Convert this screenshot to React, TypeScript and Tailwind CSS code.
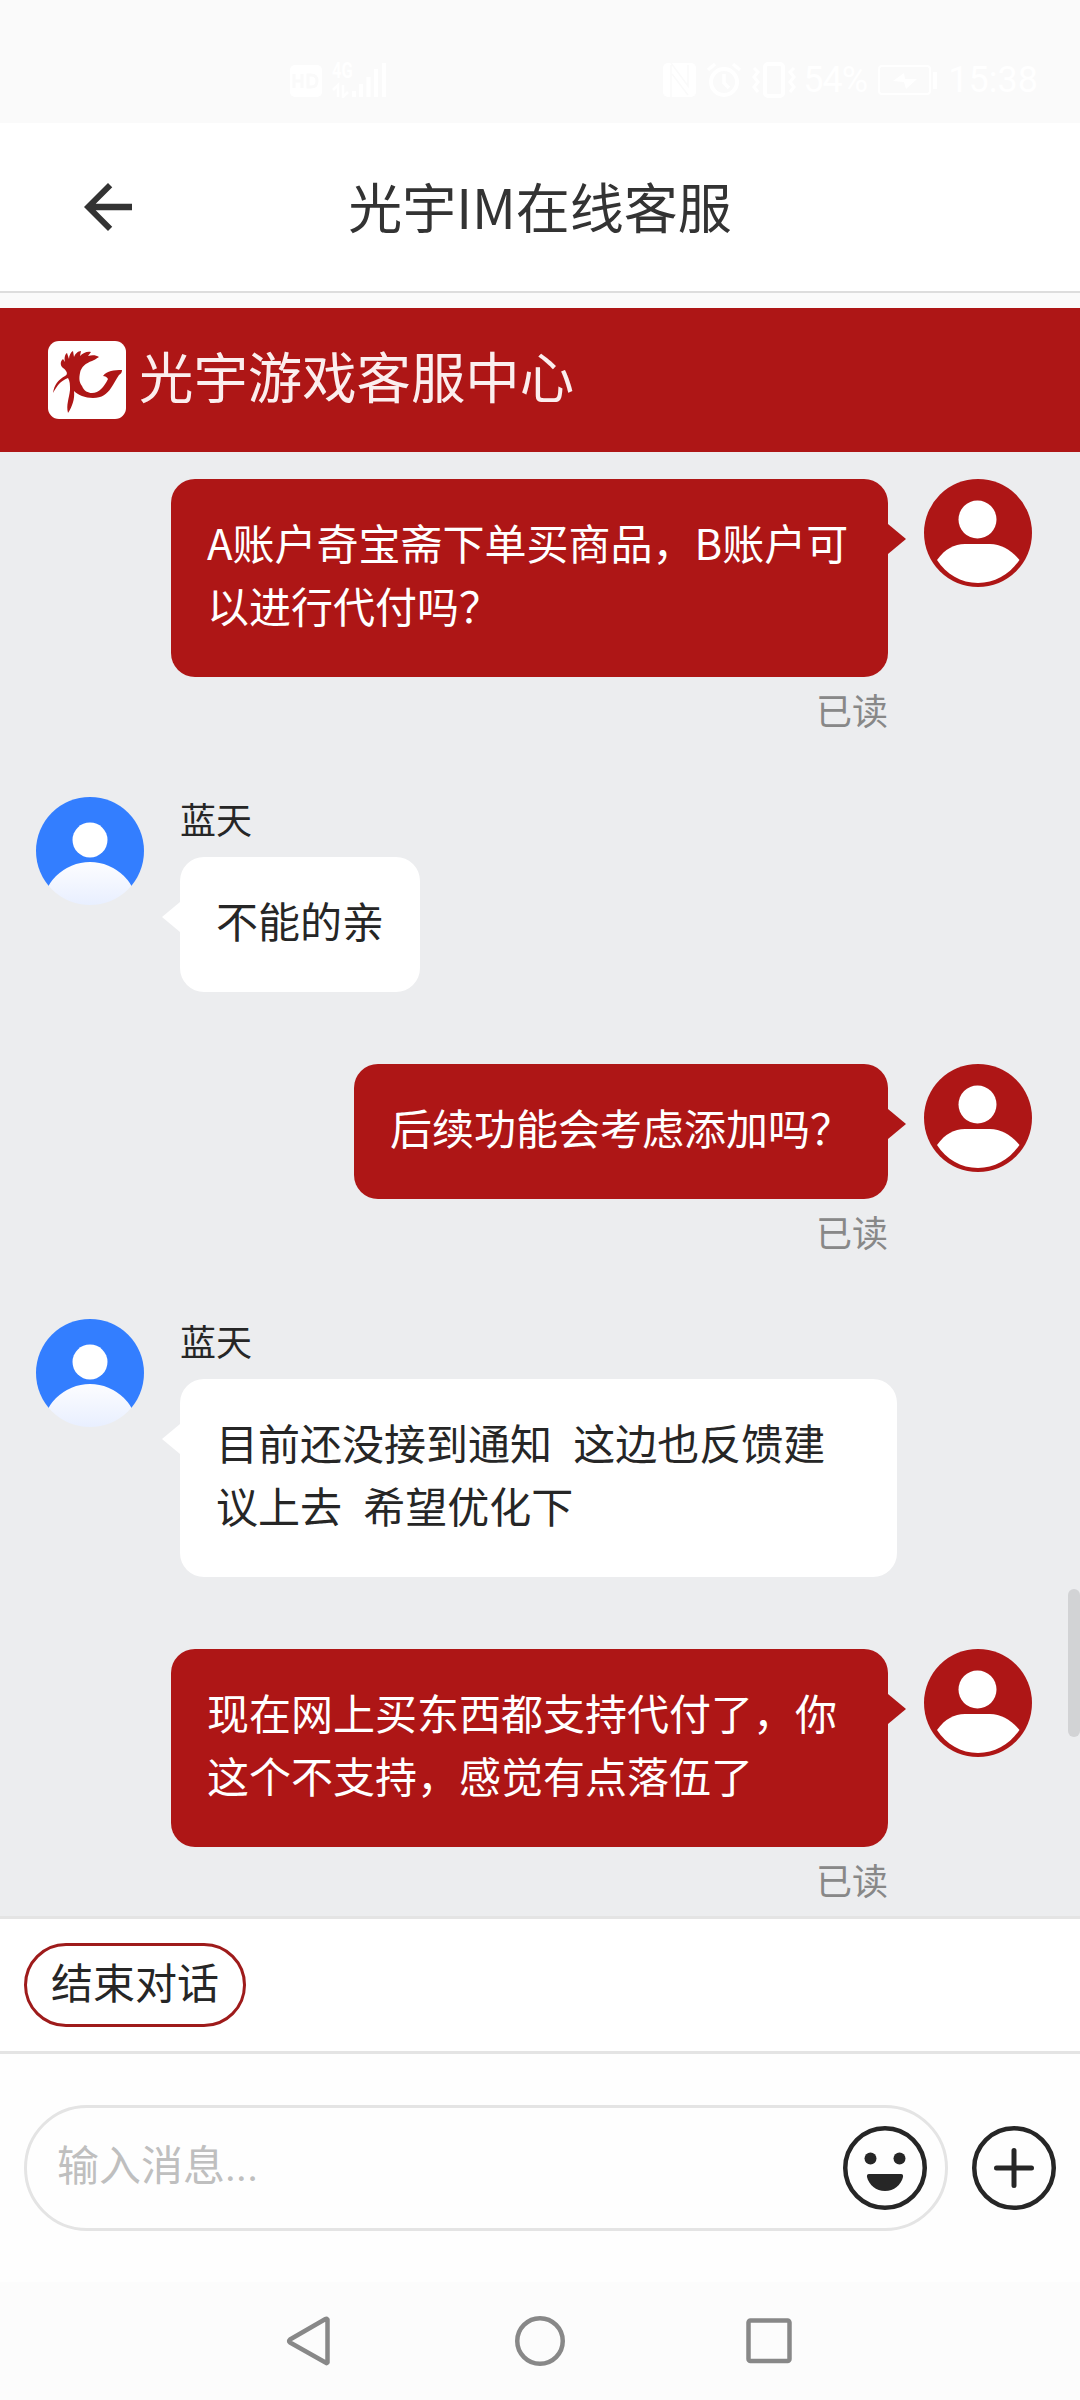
type Message = {
  id: number;
  from: "me" | "agent";
  lines: string[];
};

const messages: Message[] = [
  { id: 1, from: "me", lines: ["A账户奇宝斋下单买商品，B账户可", "以进行代付吗？"] },
  { id: 2, from: "agent", lines: ["不能的亲"] },
  { id: 3, from: "me", lines: ["后续功能会考虑添加吗？"] },
  { id: 4, from: "agent", lines: ["目前还没接到通知  这边也反馈建", "议上去  希望优化下"] },
  { id: 5, from: "me", lines: ["现在网上买东西都支持代付了，你", "这个不支持，感觉有点落伍了"] },
];

const StatusBar = () => (
  <div className="flex h-[123px] shrink-0 items-start justify-between bg-[#fafafa] pt-[62px] pr-[42px] pl-[289px] text-white">
    <div className="flex h-[36px] items-end gap-[6px]">
      <svg width="34" height="34" viewBox="0 0 34 34">
        <rect x="1" y="1" width="32" height="32" rx="5" fill="#fff" />
        <path d="M5 10v14M13 10v14M5 17h8M19 11h3q6 0 6 6t-6 6h-3z" stroke="#fafafa" strokeWidth="3" fill="none" />
      </svg>
      <div className="relative h-[36px] w-[58px]">
        <span className="absolute top-0 left-[3px] origin-left scale-x-75 font-['Roboto'] text-[22px] leading-[18px] font-bold">
          4G
        </span>
        <svg className="absolute inset-0" width="58" height="36" viewBox="0 0 58 36" stroke="#fff" fill="none">
          <path d="M9 35V23l-5 5M14 23v12l5-5" strokeWidth="2.5" />
          <path d="M25 35v-6M32 35V22M39.500 35V15M47 35V7M55 35V1" strokeWidth="4" />
        </svg>
      </div>
    </div>
    <div className="flex h-[36px] items-center">
      <svg width="36" height="36" viewBox="0 0 36 36">
        <rect x="1" y="1" width="33" height="34" rx="5" fill="#fff" />
        <path d="M9 35V3M10 12l16 21M9 1l17 23V3" stroke="#fafafa" strokeWidth="1.5" fill="none" />
      </svg>
      <svg className="ml-[8px]" width="36" height="36" viewBox="0 0 36 36" fill="none" stroke="#fff" strokeWidth="4">
        <circle cx="18" cy="20" r="13" />
        <path d="M18 12v9l5 5M2 8l7-6M34 8l-7-6" strokeWidth="3.5" />
      </svg>
      <svg className="ml-[9px]" width="46" height="36" viewBox="0 0 46 36" fill="none" stroke="#fff">
        <rect x="14" y="2" width="18" height="32" rx="3" strokeWidth="4" />
        <path d="m3 6 4 4-4 5 4 5-4 5 4 5M43 6l-4 4 4 5-4 5 4 5-4 5" strokeWidth="3" />
      </svg>
      <span className="ml-[6px] w-[69px] font-['Roboto'] text-[36px] leading-[36px] tracking-[-1px]">54%</span>
      <svg className="ml-[4px]" width="62" height="34" viewBox="0 0 62 34">
        <rect x="3" y="3" width="51" height="28" rx="3" fill="none" stroke="#fff" strokeWidth="2" />
        <path d="M59 9v17" stroke="#fff" strokeWidth="4" />
        <path d="m17 18 11-8 1 6h12L30 26l-2-7z" fill="#fff" />
      </svg>
      <span className="ml-[10px] font-['Roboto'] text-[36px] leading-[36px]">15:38</span>
    </div>
  </div>
);

const BrandLogo = () => (
  <svg className="shrink-0" width="78" height="78" viewBox="0 0 78 78">
    <rect width="78" height="78" rx="11" fill="#fff" />
    <path
      d="M17 35C21 33 18 29 15 27C12 25 12 20 15 18L17 21C16 17 17 13 19 12L21 18C21 14 23 11 25 10L26 16C27 13 30 10 33 10L32 15C35 12 39 10 43 11L40 15C44 14 48 14 51 16C48 18 46 19 44 20C38 22 33 26 32 32C31 37 31 41 34 45C36 50 40 52 44 52C51 52 56 46 60 38C59 36 57 35 55 35C57 32 60 31 63 30C66 29 70 29 74 29C74 31 73 33 71 34C68 38 66 43 63 47C59 53 54 57 45 57C37 57 30 54 26 50C27 58 24 66 20 72C18 64 21 58 22 49C22 44 22 40 20 37C12 40 9 45 5 52C6 44 10 39 17 35z"
      fill="#ae1616"
    />
  </svg>
);

const MyAvatar = () => (
  <svg className="shrink-0" width="108" height="108" viewBox="0 0 108 108">
    <circle cx="54" cy="54" r="54" fill="#ae1616" />
    <circle cx="53.5" cy="40.5" r="19" fill="#fff" />
    <path d="M13 81C21 70 30 65 41 65h25c11 0 21 6 29.5 16C86 95 71 104 54 104S22 95 13 81z" fill="#fff" />
  </svg>
);

const AgentAvatar = () => (
  <svg className="shrink-0" width="108" height="108" viewBox="0 0 108 108">
    <defs>
      <linearGradient id="body" x1="0" y1="0" x2="0" y2="1">
        <stop offset="0" stopColor="#fdfdff" />
        <stop offset="0.45" stopColor="#e8efff" />
      </linearGradient>
      <clipPath id="round">
        <circle cx="54" cy="54" r="54" />
      </clipPath>
    </defs>
    <g clipPath="url(#round)">
      <path d="M0 0h108v89H0z" fill="#337eff" />
      <circle cx="54" cy="43" r="17.5" fill="#fff" />
      <circle cx="54" cy="113" r="48" fill="url(#body)" />
    </g>
  </svg>
);

const MyMessage = ({ lines }: { lines: string[] }) => (
  <div className="flex items-start justify-end pr-[48px]">
    <div className="flex flex-col items-end">
      <div
        className={`relative rounded-[24px] bg-[#ae1616] px-[36px] pt-[31px] pb-[41px] text-[42px] leading-[63px] whitespace-pre text-white ${
          lines.length > 1 ? "w-[717px]" : ""
        }`}
      >
        {lines.map((line) => (
          <p key={line}>{line}</p>
        ))}
        <svg className="absolute top-[45px] -right-[18px]" width="19" height="30" viewBox="0 0 19 30">
          <path d="M0 0h1l18 15L1 30H0z" fill="#ae1616" />
        </svg>
      </div>
      <span className="mt-[5px] mb-[3px] text-[36px] leading-[54px] text-[#888]">已读</span>
    </div>
    <div className="ml-[36px]">
      <MyAvatar />
    </div>
  </div>
);

const AgentMessage = ({ lines }: { lines: string[] }) => (
  <div className="flex items-start pl-[36px]">
    <AgentAvatar />
    <div className="ml-[36px] flex flex-col items-start">
      <span className="h-[60px] text-[36px] leading-[42px] text-[#262626]">蓝天</span>
      <div
        className={`relative rounded-[24px] bg-white px-[36px] pt-[31px] pb-[41px] text-[42px] leading-[63px] whitespace-pre text-[#262626] [word-spacing:1.2px] ${
          lines.length > 1 ? "w-[717px]" : ""
        }`}
      >
        {lines.map((line) => (
          <p key={line}>{line}</p>
        ))}
        <svg className="absolute top-[45px] -left-[18px]" width="19" height="30" viewBox="0 0 19 30">
          <path d="M19 0h-1L0 15l18 15h1z" fill="#fff" />
        </svg>
      </div>
    </div>
  </div>
);

const NavBar = () => (
  <div className="flex h-[118px] shrink-0 items-center justify-center gap-[180px] bg-[#fcfcfc]">
    <svg width="50" height="52" viewBox="0 0 50 52" fill="none" stroke="#888" strokeWidth="4.5" strokeLinejoin="round">
      <path d="M42.500 4.500v43q-1 1-2 0L5 27.500q-1.500-1.500 0-3L40.500 4q1-.5 2 .5z" />
    </svg>
    <svg width="50" height="52" viewBox="0 0 50 52" fill="none" stroke="#888" strokeWidth="4.5">
      <circle cx="25" cy="26" r="22.750" />
    </svg>
    <svg width="50" height="52" viewBox="0 0 50 52" fill="none" stroke="#888" strokeWidth="4.5">
      <rect x="3.500" y="5.500" width="41" height="40.500" rx="2" />
    </svg>
  </div>
);

const App = () => {
  return (
    <div className="flex h-[2400px] w-[1080px] flex-col overflow-hidden bg-white font-['Noto_Sans_CJK_SC',sans-serif]">
      <StatusBar />

      <header className="relative flex h-[170px] shrink-0 items-center justify-center border-b-2 border-[#ddd] pb-[4px]">
        <svg className="absolute top-[48px] left-[72px]" width="72" height="72" viewBox="0 0 24 24" fill="#333">
          <path d="M20 10.900H7.900l5.520-5.490L12 4l-8 8 8 8 1.410-1.410L7.900 13.100H20z" />
        </svg>
        <h1 className="text-[54px] text-[#333]">光宇IM在线客服</h1>
      </header>

      <div className="h-[15px] shrink-0 bg-[#fafafa]" />

      <div className="flex h-[144px] shrink-0 items-center bg-[#ae1616] pl-[48px]">
        <BrandLogo />
        <span className="ml-[13px] pb-[10px] text-[54.4px] leading-[78px] text-[#fbeeee]">光宇游戏客服中心</span>
      </div>

      <main className="relative flex h-[1464px] shrink-0 flex-col overflow-hidden bg-[#ecedef] pt-[27px]">
        <div className="flex flex-col">
          {messages.map((m) => (
            <div key={m.id} className={m.from === "me" ? "mb-[58px]" : "mb-[72px]"}>
              {m.from === "me" ? <MyMessage lines={m.lines} /> : <AgentMessage lines={m.lines} />}
            </div>
          ))}
        </div>
        <div className="absolute top-[1137px] right-0 h-[148px] w-[12px] rounded-[6px] bg-[#d2d3d5]" />
      </main>

      <div className="flex h-[138px] shrink-0 items-center border-y-3 border-[#e4e4e4] bg-white px-[24px]">
        <button className="h-[84px] w-[222px] rounded-full border-3 border-[#9e1b1b] pb-[8px] text-[42px] leading-[70px] text-[#262626]">
          结束对话
        </button>
      </div>

      <footer className="flex h-[228px] shrink-0 items-center bg-[#fefefe] px-[24px]">
        <div className="flex h-[126px] w-[924px] items-center justify-between rounded-full border-3 border-[#e4e4e4] pr-[18px] pl-[30px]">
          <span className="pb-[7px] text-[42px] text-[#bfbfbf]">
            输入消息<span className="font-['Roboto']">...</span>
          </span>
          <svg width="84" height="84" viewBox="0 0 84 84">
            <circle cx="42" cy="42" r="39.750" fill="none" stroke="#262626" strokeWidth="4.5" />
            <circle cx="27.500" cy="32.500" r="6" fill="#262626" />
            <circle cx="56.500" cy="32.500" r="6" fill="#262626" />
            <path d="M26 48h32q2.500 0 2 3c-2 8-9 14-18 14s-16-6-18-14q-.5-3 2-3z" fill="#262626" />
          </svg>
        </div>
        <svg className="ml-[24px]" width="84" height="84" viewBox="0 0 84 84" fill="none" stroke="#262626">
          <circle cx="42" cy="42" r="39.750" strokeWidth="4.5" />
          <path d="M42 24.500v35M24.500 42h35" strokeWidth="5" strokeLinecap="round" />
        </svg>
      </footer>

      <NavBar />
    </div>
  );
};

export default App;
